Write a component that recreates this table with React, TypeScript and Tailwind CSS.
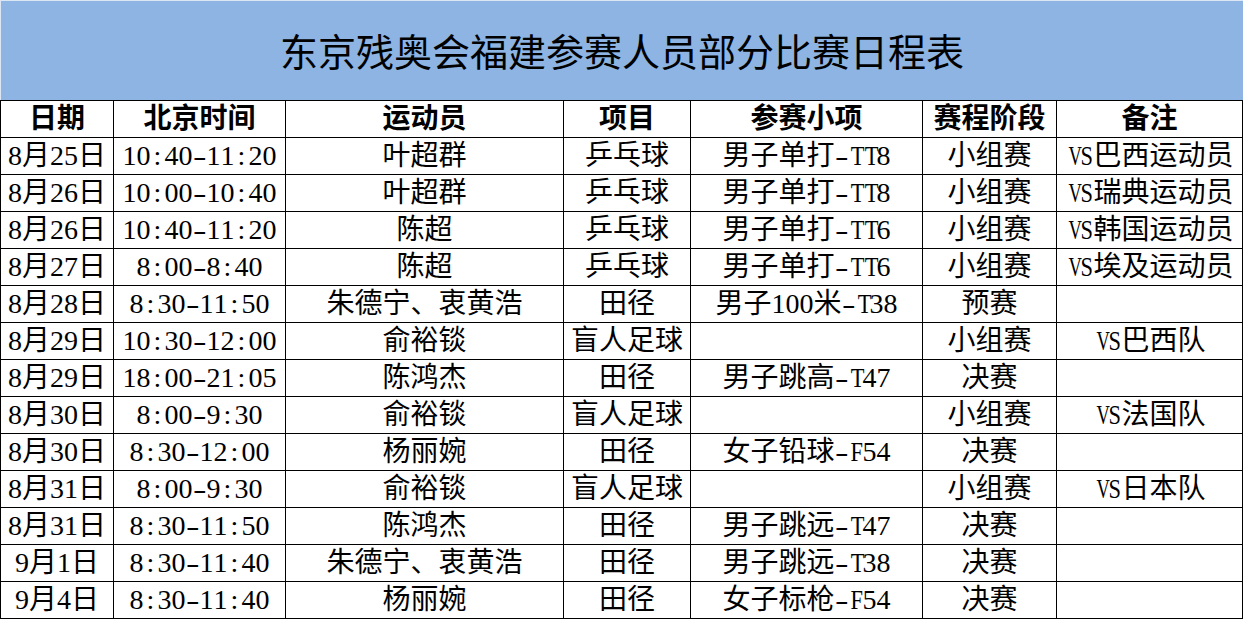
import React from "react";

const rows: string[][] = [
  ["8月25日", "10:40-11:20", "叶超群", "乒乓球", "男子单打-TT8", "小组赛", "VS巴西运动员"],
  ["8月26日", "10:00-10:40", "叶超群", "乒乓球", "男子单打-TT8", "小组赛", "VS瑞典运动员"],
  ["8月26日", "10:40-11:20", "陈超", "乒乓球", "男子单打-TT6", "小组赛", "VS韩国运动员"],
  ["8月27日", "8:00-8:40", "陈超", "乒乓球", "男子单打-TT6", "小组赛", "VS埃及运动员"],
  ["8月28日", "8:30-11:50", "朱德宁、衷黄浩", "田径", "男子100米-T38", "预赛", ""],
  ["8月29日", "10:30-12:00", "俞裕锬", "盲人足球", "", "小组赛", "VS巴西队"],
  ["8月29日", "18:00-21:05", "陈鸿杰", "田径", "男子跳高-T47", "决赛", ""],
  ["8月30日", "8:00-9:30", "俞裕锬", "盲人足球", "", "小组赛", "VS法国队"],
  ["8月30日", "8:30-12:00", "杨丽婉", "田径", "女子铅球-F54", "决赛", ""],
  ["8月31日", "8:00-9:30", "俞裕锬", "盲人足球", "", "小组赛", "VS日本队"],
  ["8月31日", "8:30-11:50", "陈鸿杰", "田径", "男子跳远-T47", "决赛", ""],
  ["9月1日", "8:30-11:40", "朱德宁、衷黄浩", "田径", "男子跳远-T38", "决赛", ""],
  ["9月4日", "8:30-11:40", "杨丽婉", "田径", "女子标枪-F54", "决赛", ""],
];

const headers = ["日期", "北京时间", "运动员", "项目", "参赛小项", "赛程阶段", "备注"];

function CellText({ text }: { text: string }) {
  const parts: React.ReactNode[] = [];
  Array.from(text).forEach((ch, i) => {
    if (/[A-Z]/.test(ch)) {
      parts.push(
        <span key={i} className="inline-block w-[0.5em] text-center">
          <span className={ch === "V" ? "inline-block scale-x-[0.66]" : "inline-block scale-x-[0.8]"}>{ch}</span>
        </span>
      );
    } else if (ch === "-") {
      parts.push(
        <span key={i} className="inline-block w-[0.5em] text-center">
          <span className="inline-block scale-x-[1.45]">{ch}</span>
        </span>
      );
    } else if (/[\x20-\x7e]/.test(ch)) {
      parts.push(
        <span key={i} className="inline-block w-[0.5em] text-center">
          {ch}
        </span>
      );
    } else {
      parts.push(<span key={i}>{ch}</span>);
    }
  });
  return <span className="whitespace-nowrap">{parts}</span>;
}

export default function App() {
  return (
    <div
      className="w-[1243px] h-[619px] overflow-hidden bg-white text-black"
      style={{ fontFamily: "'Liberation Serif', 'Noto Sans CJK SC', serif" }}
    >
      <div className="h-[100px] bg-[#8db4e2] border-t border-l border-[#dde7f3] flex items-center justify-center">
        <h1 className="text-[38px] leading-none font-normal pt-[4px]">
          东京残奥会福建参赛人员部分比赛日程表
        </h1>
      </div>
      <div className="grid grid-cols-[113px_172px_278px_127px_232px_134px_186px] border-t border-l border-black">
        {headers.map((h, i) => (
          <div
            key={"h" + i}
            className="h-[37px] border-r border-b border-black flex items-center justify-center text-[28px] leading-none font-bold"
          >
            <CellText text={h} />
          </div>
        ))}
        {rows.map((r, ri) =>
          r.map((c, ci) => (
            <div
              key={ri + "-" + ci}
              className="h-[37px] border-r border-b border-black flex items-center justify-center text-[28px] leading-none font-normal"
            >
              <CellText text={c} />
            </div>
          ))
        )}
      </div>
    </div>
  );
}
